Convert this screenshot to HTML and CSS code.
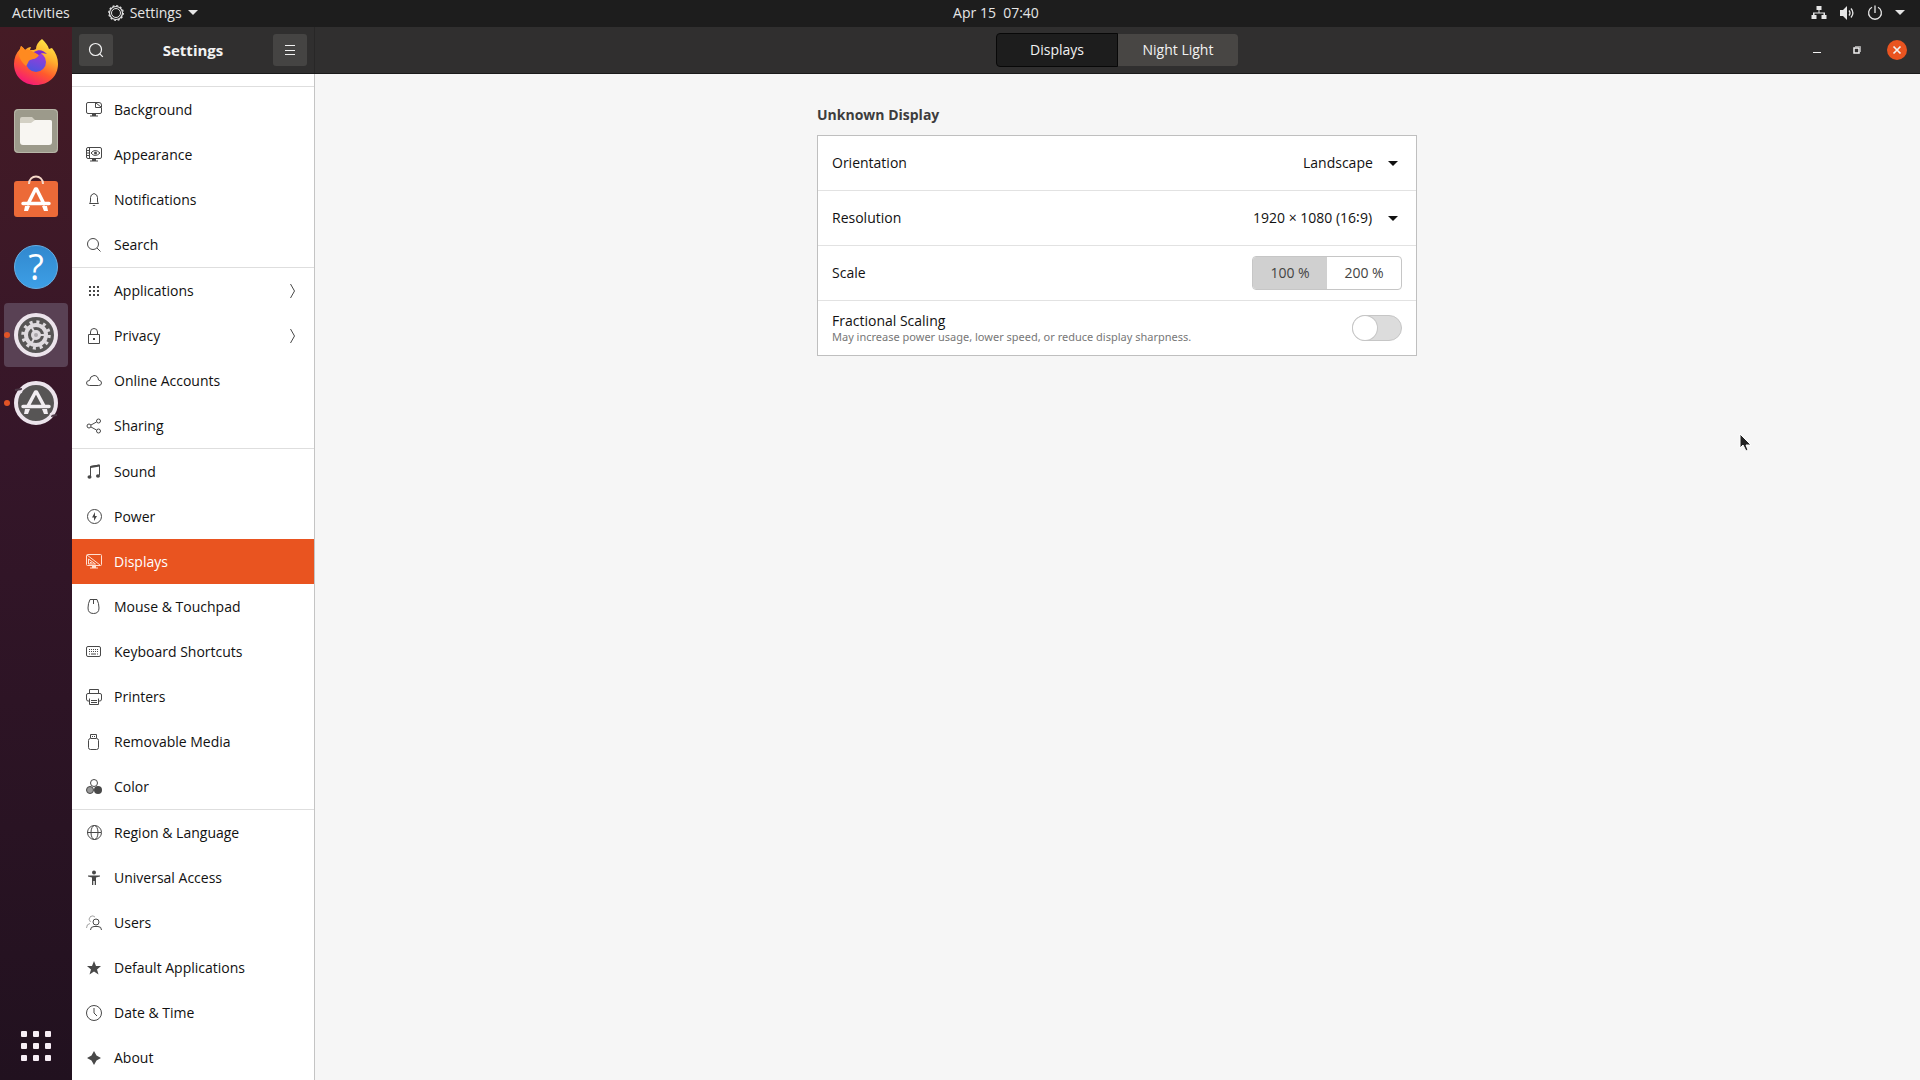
FILE: index.html
```html
<!DOCTYPE html>
<html lang="en">
<head>
    <meta charset="UTF-8">
    <meta name="viewport" content="width=device-width, initial-scale=1.0">
    <title>Settings</title>
    <link rel="stylesheet" href="styles.css">
</head>
<body>
    <header class="topbar">
        <div class="topbar-left">
            <button type="button">Activities</button>
            <button type="button" class="app-menu">
                <svg width="16" height="16" viewBox="0 0 16 16" fill="none" stroke="currentColor"><circle cx="8" cy="8" r="6.500" stroke-width="1.200"/><circle cx="8" cy="8" r="4.500"/><circle cx="8" cy="8" r="7.300" stroke-width="1.200" stroke-dasharray="2 1.822"/></svg>
                Settings
                <span class="arrow"></span>
            </button>
        </div>
        <button type="button" class="clock">Apr 15&nbsp; 07:40</button>
        <button type="button" class="status" aria-label="System menu">
            <svg width="16" height="16" viewBox="0 0 16 16" fill="currentColor"><path d="M5.500 1h5v4h-2v2.500h5.500v2.500h1.500v4h-5v-4h2v-1.500h-9v1.500h2v4h-5v-4h1.500v-2.500h5.500v-2.500h-2z"/></svg>
            <svg width="16" height="16" viewBox="0 0 16 16" fill="none" stroke="currentColor"><path d="M1 5h3l4-4v14l-4-4H1z" fill="currentColor" stroke="none"/><path d="M10 5.500q2 2.500 0 5M12 3.500q3.800 4.500 0 9" stroke-width="1.300"/></svg>
            <svg width="16" height="16" viewBox="0 0 16 16" fill="none" stroke="currentColor" stroke-width="1.300"><path d="M5 2.200a6.400 6.400 0 1 0 6 0M8 0.500v7.500"/></svg>
            <span class="arrow"></span>
        </button>
    </header>

    <div class="desktop">
        <nav class="dock" aria-label="Dock">
            <button type="button" class="launcher" aria-label="Firefox">
                <svg width="48" height="48" viewBox="0 2 48 48">
                    <defs>
                        <linearGradient id="fox" x1="0.800" y1="0" x2="0.300" y2="1"><stop offset="0" stop-color="#fff14a"/><stop offset="0.350" stop-color="#ffb02e"/><stop offset="0.650" stop-color="#ff5a2c"/><stop offset="1" stop-color="#f5157c"/></linearGradient>
                        <linearGradient id="globe" x1="0.600" y1="0" x2="0.300" y2="1"><stop offset="0" stop-color="#a239d8"/><stop offset="1" stop-color="#4a55df"/></linearGradient>
                    </defs>
                    <path d="M30 2c3 3 6 6 7 10l3-1c4 5 6 10 6 16 0 12-9 21-22 21S2 39 2 27c0-6 2-11 6-15l1-3c2 1 3 3 4 4 2-2 4-3 6-3l-1 3c3 0 5 0 6-1 0-4 2-7 6-10z" fill="url(#fox)"/>
                    <circle cx="24" cy="25" r="10" fill="url(#globe)"/>
                    <path d="M8 12l1-3c2 1 3 3 4 4 3-1 6 0 8 2 3 1 5 2 6 3-2 4-6 4-9 5-2 1-2 4-4 6-5-4-9-11-6-17z" fill="#ff8a20"/>
                    <path d="M22 15c5-3 9-2 13 2-4-1-6-1-8 1z" fill="#7a2bd0"/>
                </svg>
            </button>
            <button type="button" class="launcher" aria-label="Files">
                <svg width="44" height="44" viewBox="0 0 44 44">
                    <rect width="44" height="44" rx="4" fill="#9c9a8b"/>
                    <rect x="0.500" y="0.500" width="43" height="43" rx="4" fill="none" stroke="#b8b6a8"/>
                    <path d="M6 10q0-2 2-2h10l3 3h15q2 0 2 2v9H6z" fill="#d3d0c4"/>
                    <path d="M6 14h11l4-3h15q2 0 2 2v20q0 3-3 3H9q-3 0-3-3z" fill="#f8f6f2"/>
                </svg>
            </button>
            <button type="button" class="launcher" aria-label="Ubuntu Software">
                <svg width="44" height="48" viewBox="0 0 44 48">
                    <rect y="6" width="44" height="36" rx="3" fill="#ec6a38"/>
                    <path d="M15 9c0-10 14-10 14 0" fill="none" stroke="#f6d8c8" stroke-width="2"/>
                    <path d="M14 29L21.500 14h1L30 29M9 28.500h26" fill="none" stroke="#fff" stroke-width="3.500" stroke-linejoin="round" stroke-linecap="round"/>
                    <path d="M11 31l-1 5h4l2-5zM28 31l2 5h4l-1-5z" fill="#fff"/>
                </svg>
            </button>
            <button type="button" class="launcher" aria-label="Help">
                <svg width="44" height="44" viewBox="0 0 44 44" class="help">
                    <defs><linearGradient id="help" x1="0" y1="0" x2="0" y2="1"><stop offset="0" stop-color="#3188ce"/><stop offset="1" stop-color="#3d9fe6"/></linearGradient></defs>
                    <circle cx="22" cy="22" r="21.500" fill="url(#help)" stroke="#66afe4"/>
                    <text x="22" y="35" text-anchor="middle">?</text>
                </svg>
            </button>
            <button type="button" class="launcher running focused" aria-label="Settings">
                <svg width="44" height="44" viewBox="0 0 44 44">
                    <circle cx="22" cy="22" r="20" fill="#575555" stroke="#ece4ec" stroke-width="4"/>
                    <g fill="none" stroke="#dedade">
                        <circle cx="22" cy="22" r="10" stroke-width="4"/>
                        <circle cx="22" cy="22" r="13" stroke-width="3.500" stroke-dasharray="3 3.807"/>
                        <path d="M22 22h10M22 22l-5-9M22 22l-5 9" stroke-width="2"/>
                    </g>
                    <circle cx="22" cy="22" r="5" fill="#dedade"/>
                    <circle cx="22" cy="22" r="2" fill="#aaa6aa"/>
                </svg>
            </button>
            <button type="button" class="launcher running" aria-label="Software Updater">
                <svg width="44" height="44" viewBox="0 0 44 44">
                    <circle cx="22" cy="22" r="20" fill="#575555" stroke="#ece4ec" stroke-width="4"/>
                    <path d="M1 9l7-1M37 35l6-1" stroke="#4b3846" stroke-width="2"/>
                    <path d="M4 13l4-1 1-5zM40 31l-4 1-1 6z" fill="#ece4ec"/>
                    <path d="M14 25L21.500 11h1L30 25M9 25.500h26" fill="none" stroke="#f2eef2" stroke-width="3.500" stroke-linejoin="round" stroke-linecap="round"/>
                    <path d="M11 28l-1 5h4l2-5zM28 28l2 5h4l-1-5z" fill="#f2eef2"/>
                </svg>
            </button>
            <button type="button" class="launcher show-apps" aria-label="Show Applications">
                <svg width="30" height="30" viewBox="0 0 30 30" fill="#f8eef6">
                    <rect width="6" height="6" rx="1"/><rect x="12" width="6" height="6" rx="1"/><rect x="24" width="6" height="6" rx="1"/>
                    <rect y="12" width="6" height="6" rx="1"/><rect x="12" y="12" width="6" height="6" rx="1"/><rect x="24" y="12" width="6" height="6" rx="1"/>
                    <rect y="24" width="6" height="6" rx="1"/><rect x="12" y="24" width="6" height="6" rx="1"/><rect x="24" y="24" width="6" height="6" rx="1"/>
                </svg>
            </button>
        </nav>

        <div class="window">
            <header class="headerbar">
                <div class="headerbar-side">
                    <button type="button" class="header-button" aria-label="Search">
                        <svg width="16" height="16" viewBox="0 0 16 16" fill="none" stroke="currentColor" stroke-width="1.200"><circle cx="7.500" cy="7.500" r="6"/><path d="M11.800 11.800l3 3"/></svg>
                    </button>
                    <h1>Settings</h1>
                    <button type="button" class="header-button" aria-label="Menu">
                        <svg width="16" height="16" viewBox="0 0 16 16" fill="none" stroke="currentColor"><path d="M3 3.500h10M3 8.500h10M3 12.500h10"/></svg>
                    </button>
                </div>
                <div class="headerbar-main">
                    <div class="tabs">
                        <button type="button" class="tab active">Displays</button>
                        <button type="button" class="tab">Night Light</button>
                    </div>
                    <div class="window-controls">
                        <button type="button" aria-label="Minimize"><svg width="20" height="20" viewBox="0 0 20 20"><path d="M6 12.500h8" stroke="currentColor"/></svg></button>
                        <button type="button" aria-label="Restore"><svg width="20" height="20" viewBox="0 0 20 20" fill="none" stroke="currentColor"><path d="M7 8h5v5H7z" stroke-width="1.500"/><path d="M8 6.500h5.500V12" opacity="0.600"/></svg></button>
                        <button type="button" class="close" aria-label="Close"><svg width="20" height="20" viewBox="0 0 20 20"><path d="M6.500 6.500l7 7M13.500 6.500l-7 7" stroke="currentColor" stroke-width="1.700"/></svg></button>
                    </div>
                </div>
            </header>

            <div class="panes">
                <nav class="sidebar" aria-label="Settings panels">
                    <ul>
                        <li><a href="#"><svg class="icon" viewBox="0 0 16 16"><path d="M15.500 6v4q0 1.500-1.500 1.500H2Q.5 11.500.5 10V2Q.5.500 2 .500h8"/><path d="M9.500.500v5h6V3q0-2.500-2.500-2.500zM10 1l5 4"/><path d="M6 12h4v1.500h2v1H4v-1h2z" class="solid"/></svg>Background</a></li>
                        <li><a href="#"><svg class="icon" viewBox="0 0 16 16"><rect x="0.500" y="0.500" width="15" height="11" rx="1.500"/><path d="M3.500 1v10M1 3.500h2M1 6h2M1 8.500h2M5 6q4-5 9 0-5 5-9 0z"/><circle cx="9.500" cy="6" r="1.500" class="solid"/><path d="M6 12h4v1.500h2v1H4v-1h2z" class="solid"/></svg>Appearance</a></li>
                        <li><a href="#"><svg class="icon" viewBox="0 0 16 16"><path d="M3.500 11.500h9q-1-1-1-2.500V5.500q0-3-3.500-4-3.500 1-3.500 4V9q0 1.500-1 2.500z"/><path d="M6.500 13h3q-1.500 2-3 0z" class="solid"/></svg>Notifications</a></li>
                        <li><a href="#"><svg class="icon" viewBox="0 0 16 16"><circle cx="7" cy="7" r="5.500"/><path d="M11 11l3.500 3.500"/></svg>Search</a></li>
                    </ul>
                    <ul>
                        <li><a href="#"><svg class="icon" viewBox="0 0 16 16"><path d="M3 3h2v2H3zM7 3h2v2H7zM11 3h2v2h-2zM3 7h2v2H3zM7 7h2v2H7zM11 7h2v2h-2zM3 11h2v2H3zM7 11h2v2H7zM11 11h2v2h-2z" class="solid"/></svg>Applications<svg class="chevron" viewBox="0 0 8 16"><path d="M1.500 1l4 7-4 7"/></svg></a></li>
                        <li><a href="#"><svg class="icon" viewBox="0 0 16 16"><path d="M2.500 6.500h11v9h-11zM4.500 6V4q0-3.500 3.500-3.500T11.500 4v2"/><path d="M7 10h2v2H7z" class="solid"/></svg>Privacy<svg class="chevron" viewBox="0 0 8 16"><path d="M1.500 1l4 7-4 7"/></svg></a></li>
                        <li><a href="#"><svg class="icon" viewBox="0 0 16 16"><path d="M3.500 12.500Q.5 12.500.5 10q0-2.500 3-2.500Q4 3 8 2.500q4 0 4.500 4.500 3 .500 3 3t-3 2.500z"/></svg>Online Accounts</a></li>
                        <li><a href="#"><svg class="icon" viewBox="0 0 16 16"><circle cx="3" cy="8" r="2"/><circle cx="12.500" cy="3" r="2"/><circle cx="12.500" cy="13" r="2"/><path d="M5 7l5.500-3M5 9l5.500 3"/></svg>Sharing</a></li>
                    </ul>
                    <ul>
                        <li><a href="#"><svg class="icon" viewBox="0 0 16 16"><path d="M4.500 12V2.500l9-1.500v10"/><path d="M4.500 3l9-1.500" stroke-width="2"/><ellipse cx="3.500" cy="13" rx="2" ry="1.800" class="solid"/><ellipse cx="12" cy="12" rx="2" ry="1.800" class="solid"/></svg>Sound</a></li>
                        <li><a href="#"><svg class="icon" viewBox="0 0 16 16"><circle cx="8.500" cy="7.500" r="7"/><path d="M9 3L6 8.500h2L8 12l3-5H9z" class="solid"/></svg>Power</a></li>
                        <li><a href="#" class="selected" aria-current="page"><svg class="icon" viewBox="0 0 16 16"><rect x="0.500" y="0.500" width="15" height="11" rx="1"/><path d="M1 1l13 10M2.500 5v5h7zM4.500 8v1h1z"/><path d="M6 12h4v1.500h2v1H4v-1h2z" class="solid"/></svg>Displays</a></li>
                        <li><a href="#"><svg class="icon" viewBox="0 0 16 16"><path d="M4 .500h7q2 4 2 8.500 0 5.500-5.500 5.500T2 9Q2 4.500 4 .500zM7.500 1v4"/></svg>Mouse &amp; Touchpad</a></li>
                        <li><a href="#"><svg class="icon" viewBox="0 0 16 16"><rect x="0.500" y="2.500" width="14" height="10" rx="1.500"/><path d="M3 5.500h10M3 7.500h10" stroke-dasharray="1 1"/><path d="M3 10h1M5 10h5M11 10h1"/></svg>Keyboard Shortcuts</a></li>
                        <li><a href="#"><svg class="icon" viewBox="0 0 16 16"><path d="M3.500 4V.500h9V4M3 12H2Q.5 12 .5 10V6Q.5 4.500 2 4.500h12q1.500 0 1.500 1.500v4q0 2-1.500 2h-1M3.500 9.500v6h9v-6M5 11.500h6M5 13.500h6"/></svg>Printers</a></li>
                        <li><a href="#"><svg class="icon" viewBox="0 0 16 16"><path d="M4.500 4V.500h6V4M6 2.500h1M8 2.500h1"/><rect x="2.500" y="4.500" width="10" height="11" rx="2"/></svg>Removable Media</a></li>
                        <li><a href="#"><svg class="icon" viewBox="0 0 16 16"><circle cx="8" cy="4" r="3.500"/><circle cx="4" cy="11" r="3.500" class="half"/><circle cx="12" cy="11" r="4" class="solid"/></svg>Color</a></li>
                    </ul>
                    <ul>
                        <li><a href="#"><svg class="icon" viewBox="0 0 16 16"><circle cx="8.500" cy="7.500" r="7"/><ellipse cx="8.500" cy="7.500" rx="3.500" ry="7"/><path d="M1 7.500h14"/></svg>Region &amp; Language</a></li>
                        <li><a href="#"><svg class="icon" viewBox="0 0 16 16"><circle cx="8" cy="2.500" r="2" class="solid"/><path d="M2 5.500h12v1l-4 1V15H8.700v-4H7.300v4H6V7.500l-4-1z" class="solid"/></svg>Universal Access</a></li>
                        <li><a href="#"><svg class="icon" viewBox="0 0 16 16"><g opacity="0.500"><path d="M9 2Q7 0 4.500 1.500 1.500 4 4.500 7M.5 13q0-4 3.500-4.500"/></g><circle cx="10" cy="7" r="3"/><path d="M4.500 15q0-3.500 3.500-3.500h4q3.500 0 3.500 3.500"/></svg>Users</a></li>
                        <li><a href="#"><svg class="icon" viewBox="0 0 16 16"><path d="M8 1l2 5h5l-4 3.500 1.500 5L8 11.500l-4.500 3L5 9.500 1 6h5z" class="solid"/></svg>Default Applications</a></li>
                        <li><a href="#"><svg class="icon" viewBox="0 0 16 16"><circle cx="8" cy="8" r="7.500"/><path d="M8 3v5l3 3"/></svg>Date &amp; Time</a></li>
                        <li><a href="#"><svg class="icon" viewBox="0 0 16 16"><path d="M8 1l2.500 4.500L15 8l-4.500 2.500L8 15l-2.500-4.500L1 8l4.500-2.500z" class="solid"/></svg>About</a></li>
                    </ul>
                </nav>

                <main>
                    <section class="display">
                        <h2>Unknown Display</h2>
                        <div class="card">
                            <div class="row">
                                <label for="orientation">Orientation</label>
                                <span class="dropdown">
                                    <select id="orientation"><option>Landscape</option></select>
                                    <span class="arrow"></span>
                                </span>
                            </div>
                            <div class="row">
                                <label for="resolution">Resolution</label>
                                <span class="dropdown">
                                    <select id="resolution"><option>1920 × 1080 (16∶9)</option></select>
                                    <span class="arrow"></span>
                                </span>
                            </div>
                            <div class="row">
                                <span id="scale-label">Scale</span>
                                <div class="scale" role="radiogroup" aria-labelledby="scale-label">
                                    <label><input type="radio" name="scale" checked><span>100 %</span></label>
                                    <label><input type="radio" name="scale"><span>200 %</span></label>
                                </div>
                            </div>
                            <div class="row">
                                <label for="fractional">Fractional Scaling
                                    <small>May increase power usage, lower speed, or reduce display sharpness.</small>
                                </label>
                                <input type="checkbox" role="switch" class="switch" id="fractional">
                            </div>
                        </div>
                    </section>
                </main>
            </div>
        </div>
    </div>

    <svg class="pointer" width="14" height="20" viewBox="0 0 14 20"><path d="M1 1v14l3-3 3 6 2-1-2-5h5z" fill="#222" stroke="#fff"/></svg>
</body>
</html>
```
FILE: styles.css
```css
* {
    box-sizing: border-box;
}

body {
    margin: 0;
    min-height: 100vh;
    display: flex;
    flex-direction: column;
    font-family: "Open Sans", "Noto Sans", sans-serif;
    font-size: 14px;
    line-height: 20px;
    color: #111;
}

button, select, input {
    font: inherit;
    color: inherit;
    border: none;
    background: none;
    padding: 0;
    margin: 0;
}

svg {
    display: block;
    flex: none;
}

h1, h2, ul {
    margin: 0;
    padding: 0;
    font-size: 14px;
}

.arrow {
    border: 5px solid transparent;
    border-top-color: currentColor;
    border-bottom: none;
}

/* top panel, the clock is centred on the area right of the dock */
.topbar {
    display: grid;
    grid-template-columns: 72px 1fr auto 1fr;
    height: 27px;
    padding-bottom: 2px;
    background: #1d1d1d;
    color: #e6e6e6;
}

.topbar-left {
    grid-column: 1 / 3;
    display: flex;
    gap: 38px;
    padding-left: 12px;
}

.app-menu {
    display: flex;
    align-items: center;
    gap: 6px;
}

.status {
    justify-self: end;
    display: flex;
    align-items: center;
    gap: 12px;
    padding-right: 15px;
}

.desktop {
    flex: 1;
    display: flex;
}

/* dock */
.dock {
    width: 72px;
    padding: 4px 4px 2px;
    display: flex;
    flex-direction: column;
    gap: 4px;
    background: linear-gradient(#451b25, #351629 40%, #21111f);
}

.launcher {
    position: relative;
    height: 64px;
    display: flex;
    align-items: center;
    justify-content: center;
    border-radius: 4px;
}

.focused {
    background: #594154;
}

.running::before {
    content: "";
    position: absolute;
    left: 0;
    top: 29px;
    width: 6px;
    height: 6px;
    border-radius: 50%;
    background: #e25426;
}

.help {
    overflow: visible;
}

.help text {
    font-size: 36px;
    fill: #fff;
}

.show-apps {
    margin-top: auto;
}

/* window */
.window {
    flex: 1;
    display: flex;
    flex-direction: column;
}

.headerbar {
    display: flex;
    height: 47px;
    background: #302f2f;
    border-bottom: 1px solid #1a1a1a;
    color: #f2f2f2;
}

.headerbar-side {
    width: 243px;
    padding: 0 7px;
    display: flex;
    align-items: center;
    justify-content: space-between;
    border-right: 1px solid #282727;
}

.headerbar h1 {
    font-size: 15px;
}

.header-button {
    width: 34px;
    height: 32px;
    display: flex;
    align-items: center;
    justify-content: center;
    border-radius: 3px;
    background: #454443;
}

.headerbar-main {
    flex: 1;
    display: grid;
    grid-template-columns: 1fr auto 1fr;
    align-items: center;
}

.tabs {
    grid-column: 2;
    display: flex;
}

.tab {
    width: 121px;
    height: 34px;
    border: 1px solid #302f2f;
    border-left: none;
    border-radius: 0 4px 4px 0;
    background: #484644;
    background-clip: padding-box;
}

.tab.active {
    width: 122px;
    background: #1d1d1d;
    border: 1px solid #080808;
    border-radius: 4px 0 0 4px;
}

.window-controls {
    justify-self: end;
    display: flex;
    gap: 20px;
    padding-right: 13px;
}

.close {
    border-radius: 50%;
    background: #e95420;
}

.panes {
    flex: 1;
    display: flex;
}

/* sidebar */
.sidebar {
    width: 243px;
    padding-top: 12px;
    background: #fff;
    border-right: 1px solid #c4c4c4;
}

.sidebar ul {
    list-style: none;
    border-top: 1px solid #dedede;
}

.sidebar a {
    display: flex;
    align-items: center;
    gap: 12px;
    height: 45px;
    padding: 0 17px 0 14px;
    color: inherit;
    text-decoration: none;
}

.sidebar .selected {
    background: #e95420;
    color: #fff;
}

.icon, .chevron {
    width: 16px;
    height: 16px;
    fill: none;
    stroke: #484848;
}

.chevron {
    width: 8px;
    margin-left: auto;
}

.icon .solid {
    fill: #484848;
    stroke: none;
}

.icon .half {
    fill: #999;
}

.selected .icon {
    stroke: #ffe0d2;
}

.selected .icon .solid {
    fill: #ffe0d2;
}

/* displays panel */
main {
    flex: 1;
    padding: 31px 25px 24px 24px;
    background: #f6f6f6;
}

.display {
    max-width: 600px;
    margin: 0 auto;
}

h2 {
    margin-bottom: 10px;
    color: #3d3d3d;
}

.card {
    background: #fff;
    border: 1px solid #bfbfbf;
}

.row {
    display: flex;
    align-items: center;
    justify-content: space-between;
    height: 54px;
    padding: 0 14px;
}

.row + .row {
    height: 55px;
    border-top: 1px solid #e2e2e2;
}

.dropdown {
    display: flex;
    align-items: center;
    gap: 15px;
    padding-right: 4px;
}

.dropdown select {
    appearance: none;
}

.dropdown .arrow {
    pointer-events: none;
}

.scale {
    display: flex;
    width: 150px;
    height: 34px;
    border: 1px solid #c6c6c6;
    border-radius: 4px;
    overflow: hidden;
    color: #444;
}

.scale label {
    flex: 1;
    display: flex;
}

.scale input {
    appearance: none;
}

.scale span {
    flex: 1;
    line-height: 32px;
    text-align: center;
}

.scale input:checked + span {
    background: #d0d0d0;
}

.row small {
    display: block;
    padding-bottom: 2px;
    font-family: "Noto Sans", "Open Sans", sans-serif;
    font-size: 11px;
    line-height: 12px;
    color: #777;
}

.switch {
    appearance: none;
    width: 50px;
    height: 26px;
    border: 1px solid #c6c6c6;
    border-radius: 13px;
    background: #dcdcdc;
}

.switch::before {
    content: "";
    display: block;
    width: 24px;
    height: 24px;
    border-radius: 50%;
    background: #fff;
    box-shadow: 0 0 0 1px #c6c6c6;
}

.switch:checked {
    background: #e95420;
}

.switch:checked::before {
    margin-left: 24px;
}

.pointer {
    position: absolute;
    left: 1739px;
    top: 433px;
    pointer-events: none;
}
```
